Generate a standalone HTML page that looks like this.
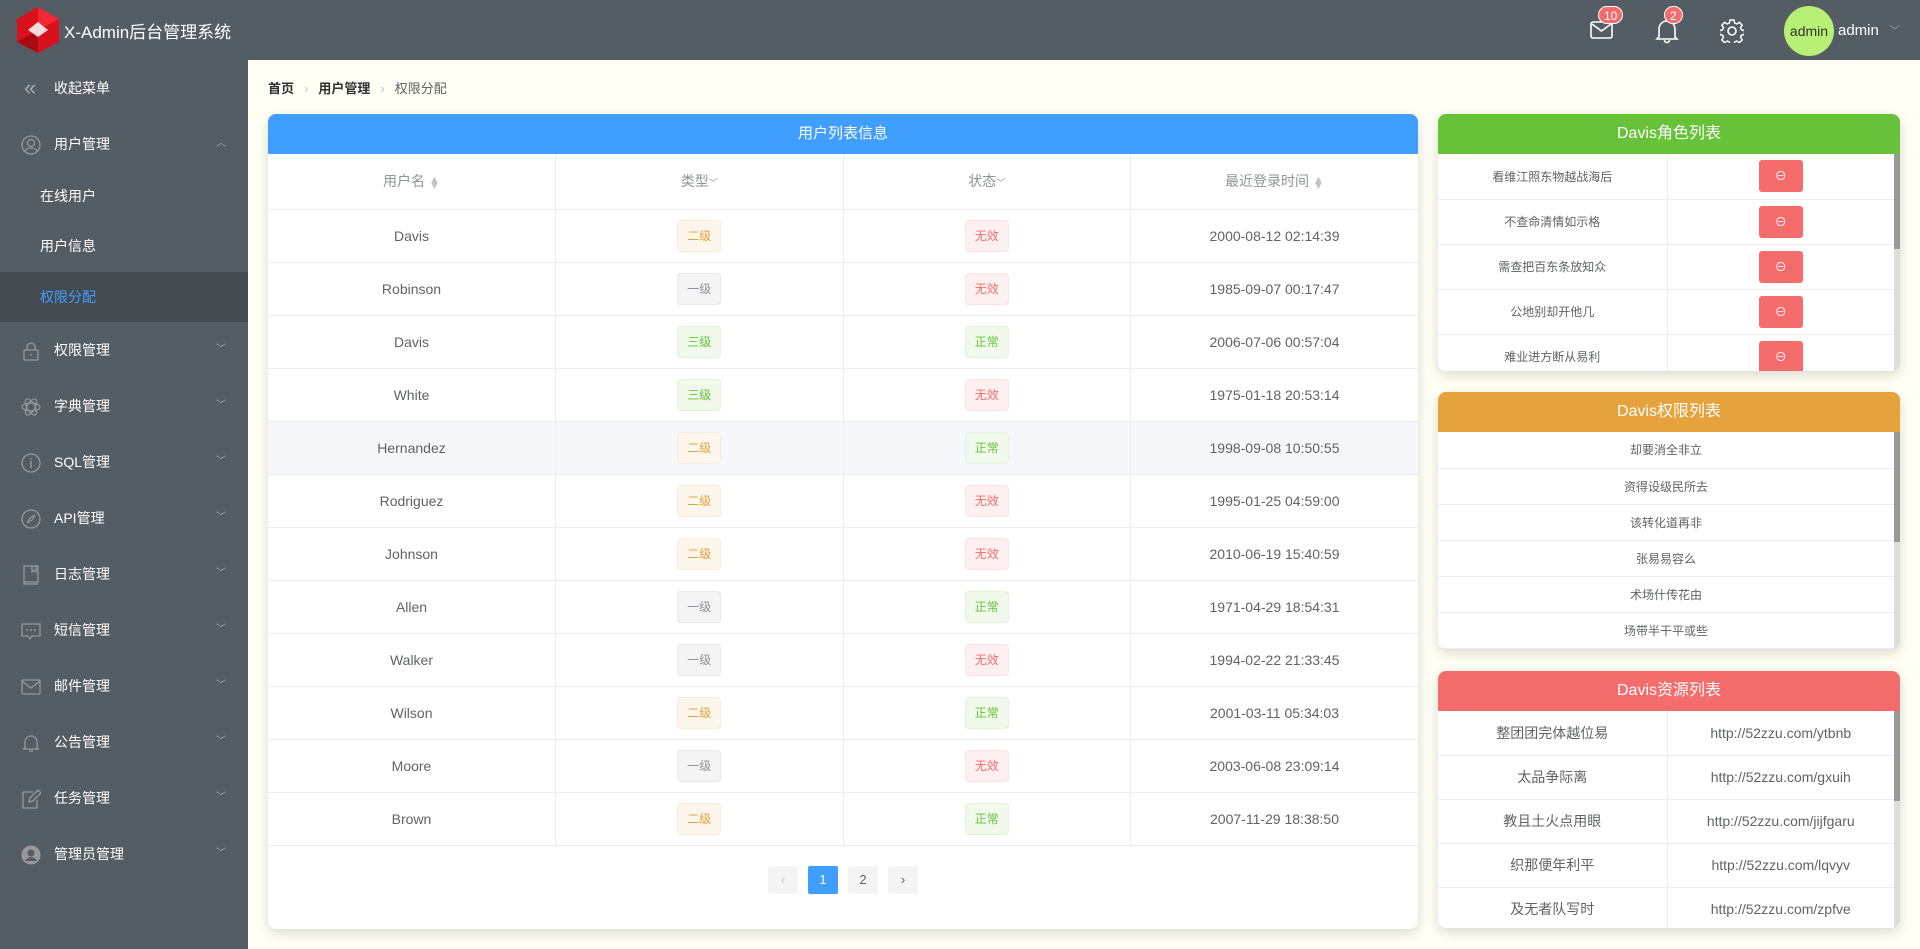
<!DOCTYPE html>
<html><head><meta charset="utf-8">
<style>
*{box-sizing:border-box;margin:0;padding:0}
body{width:1920px;height:949px;overflow:hidden;background:#fffff4;font-family:"Liberation Sans","Noto Sans CJK SC",sans-serif;position:relative;color:#606266}
.top{position:absolute;left:0;top:0;width:1920px;height:60px;background:#545c64}
.side{position:absolute;left:0;top:60px;width:248px;height:889px;background:#545c64}
.it{position:absolute;left:0;width:248px;height:56px;line-height:56px;color:#fff;font-size:14px}
.it .ic{position:absolute;left:21px;top:19px;width:20px;height:20px}
.it .tx{position:absolute;left:54px}
.it .ar{position:absolute;left:216px;top:0;color:#aaa;font-size:10px}
.sub{position:absolute;left:0;width:248px;height:50px;line-height:50px;color:#fff;font-size:14px;padding-left:40px}
.card{position:absolute;background:#fff;border-radius:8px;box-shadow:0 4px 12px rgba(0,0,0,.15);overflow:hidden}
.ch{height:40px;line-height:40px;text-align:center;color:#fff;font-size:16px}
table{border-collapse:collapse;width:100%;table-layout:fixed}
td,th{border-bottom:1px solid #ebeef5;border-right:1px solid #ebeef5;text-align:center;font-weight:normal}
td:last-child,th:last-child{border-right:none}
.main td{height:53px;font-size:14px}
.main th{height:55px;color:#909399;font-size:14px}
.tag{display:inline-block;width:44px;height:32px;line-height:30px;border:1px solid;border-radius:4px;font-size:12px}
.o{color:#e6a23c;background:#fdf6ec;border-color:#faecd8}
.g{color:#909399;background:#f4f4f5;border-color:#e9e9eb}
.s{color:#67c23a;background:#f0f9eb;border-color:#e1f3d8}
.r{color:#f56c6c;background:#fef0f0;border-color:#fde2e2}
.pg{position:absolute;top:866px;width:30px;height:28px;line-height:28px;text-align:center;background:#f4f4f5;border-radius:2px;font-size:13px;color:#606266}
.sc{position:absolute;right:0;width:6px;background:#ddd}
.sc i{display:block;width:6px;background:#999}
.badge{position:absolute;height:18px;line-height:18px;border-radius:9px;background:#f56c6c;color:#fff;font-size:12px;text-align:center;border:1px solid #fff;padding:0 5px}
.btn{display:inline-block;width:44px;height:32px;line-height:32px;background:#f56c6c;color:#fff;border-radius:3px}
.srt{color:#c0c4cc;font-size:11px;display:inline-block;line-height:6px;vertical-align:middle;margin-left:4px}
</style></head><body>
<div class="top">
 <svg style="position:absolute;left:16px;top:6px" width="44" height="48" viewBox="0 0 44 48"><polygon points="22,1 43,13 43,36 22,47 1,36 1,13" fill="#d9111b"/><polygon points="22,1 43,13 22,24" fill="#f02a30"/><polygon points="1,36 22,24 22,47" fill="#a80c12"/><polygon points="22,16 32,24 22,31 12,24" fill="#fff" opacity=".85"/></svg>
 <div style="position:absolute;left:64px;top:18px;color:#fff;font-size:17px">X-Admin后台管理系统</div>
 <svg style="position:absolute;left:1590px;top:20px" width="24" height="20" viewBox="0 0 24 20"><rect x="1" y="2" width="21" height="16" rx="2" fill="none" stroke="#fff" stroke-width="1.6"/><path d="M2 4l9.5 7 9.5-7" fill="none" stroke="#fff" stroke-width="1.6"/></svg>
 <div class="badge" style="left:1598px;top:6px">10</div>
 <svg style="position:absolute;left:1655px;top:18px" width="24" height="26" viewBox="0 0 24 26"><path d="M4 19V11a8 8 0 0116 0v8l2 2H2z M9.5 22a2.5 2.5 0 005 0 M12 1v2" fill="none" stroke="#fff" stroke-width="1.6"/></svg>
 <div class="badge" style="left:1664px;top:6px">2</div>
 <svg style="position:absolute;left:1720px;top:19px" width="24" height="24" viewBox="0 0 24 24"><circle cx="12" cy="12" r="4" fill="none" stroke="#fff" stroke-width="1.6"/><path d="M10 1h4l.6 3 2.2 1 2.6-1.7 2.8 2.8-1.7 2.6 1 2.2 3 .6v4l-3 .6-1 2.2 1.7 2.6-2.8 2.8-2.6-1.7-2.2 1-.6 3h-4l-.6-3-2.2-1-2.6 1.7-2.8-2.8 1.7-2.6-1-2.2-3-.6v-4l3-.6 1-2.2-1.7-2.6 2.8-2.8 2.6 1.7 2.2-1z" fill="none" stroke="#fff" stroke-width="1.5" stroke-linejoin="round"/></svg>
 <div style="position:absolute;left:1784px;top:6px;width:50px;height:50px;border-radius:50%;background:#b8ef75;color:#333;font-size:14px;line-height:50px;text-align:center">admin</div>
 <div style="position:absolute;left:1838px;top:22px;color:#fff;font-size:15px">admin</div>
 <div style="position:absolute;left:1890px;top:22px;color:#aaa;font-size:10px">﹀</div>
</div>
<div class="side">
 <div class="it" style="top:0"><span class="ic" style="color:#aaa;font-size:22px;line-height:18px;left:24px">«</span><span class="tx">收起菜单</span></div>
 <div class="it" style="top:56px"><svg class="ic" viewBox="0 0 20 20"><circle cx="10" cy="10" r="9" fill="none" stroke="#999" stroke-width="1.3"/><circle cx="10" cy="8" r="3.5" fill="none" stroke="#999" stroke-width="1.3"/><path d="M4 16c2-4 10-4 12 0" fill="none" stroke="#999" stroke-width="1.3"/></svg><span class="tx">用户管理</span><span class="ar">︿</span></div>
 <div class="sub" style="top:111px">在线用户</div>
 <div class="sub" style="top:161px">用户信息</div>
 <div class="sub" style="top:212px;background:#434a50;color:#409eff">权限分配</div>
 <div class="it" style="top:262px"><svg class="ic" viewBox="0 0 20 20"><rect x="3" y="9" width="14" height="10" rx="1" fill="none" stroke="#999" stroke-width="1.3"/><path d="M6 9V6a4 4 0 018 0v3M10 13v2" fill="none" stroke="#999" stroke-width="1.3"/></svg><span class="tx">权限管理</span><span class="ar">﹀</span></div>
 <div class="it" style="top:318px"><svg class="ic" viewBox="0 0 20 20"><ellipse cx="10" cy="10" rx="9" ry="4" fill="none" stroke="#999" stroke-width="1.2"/><ellipse cx="10" cy="10" rx="9" ry="4" transform="rotate(60 10 10)" fill="none" stroke="#999" stroke-width="1.2"/><ellipse cx="10" cy="10" rx="9" ry="4" transform="rotate(120 10 10)" fill="none" stroke="#999" stroke-width="1.2"/></svg><span class="tx">字典管理</span><span class="ar">﹀</span></div>
 <div class="it" style="top:374px"><svg class="ic" viewBox="0 0 20 20"><circle cx="10" cy="10" r="9" fill="none" stroke="#999" stroke-width="1.3"/><path d="M10 8v7M10 5v1.5" stroke="#999" stroke-width="1.5"/></svg><span class="tx">SQL管理</span><span class="ar">﹀</span></div>
 <div class="it" style="top:430px"><svg class="ic" viewBox="0 0 20 20"><circle cx="10" cy="10" r="9" fill="none" stroke="#999" stroke-width="1.3"/><path d="M14 6l-3 5-5 3 3-5z" fill="none" stroke="#999" stroke-width="1.2"/></svg><span class="tx">API管理</span><span class="ar">﹀</span></div>
 <div class="it" style="top:486px"><svg class="ic" viewBox="0 0 20 20"><path d="M3 1h14v16H3zM3 17v2h14M11 1v6l2-1.5 2 1.5V1" fill="none" stroke="#999" stroke-width="1.3"/></svg><span class="tx">日志管理</span><span class="ar">﹀</span></div>
 <div class="it" style="top:542px"><svg class="ic" viewBox="0 0 20 20"><path d="M1 3h18v12h-8l-2 3-2-3H1z" fill="none" stroke="#999" stroke-width="1.3"/><circle cx="6" cy="9" r="1" fill="#999"/><circle cx="10" cy="9" r="1" fill="#999"/><circle cx="14" cy="9" r="1" fill="#999"/></svg><span class="tx">短信管理</span><span class="ar">﹀</span></div>
 <div class="it" style="top:598px"><svg class="ic" viewBox="0 0 20 20"><rect x="1" y="3" width="18" height="14" rx="1" fill="none" stroke="#999" stroke-width="1.3"/><path d="M1 4l9 7 9-7" fill="none" stroke="#999" stroke-width="1.3"/></svg><span class="tx">邮件管理</span><span class="ar">﹀</span></div>
 <div class="it" style="top:654px"><svg class="ic" viewBox="0 0 20 20"><path d="M4 15V9a6 6 0 0112 0v6l2 1H2zM8 18h4" fill="none" stroke="#999" stroke-width="1.3"/></svg><span class="tx">公告管理</span><span class="ar">﹀</span></div>
 <div class="it" style="top:710px"><svg class="ic" viewBox="0 0 20 20"><path d="M2 3h10M2 3v16h14v-8M8 13l1-4 8-8 3 3-8 8z" fill="none" stroke="#999" stroke-width="1.3"/></svg><span class="tx">任务管理</span><span class="ar">﹀</span></div>
 <div class="it" style="top:766px"><svg class="ic" viewBox="0 0 20 20"><circle cx="10" cy="10" r="9.5" fill="#999"/><circle cx="10" cy="8" r="3.5" fill="#545c64"/><path d="M4 16c2-5 10-5 12 0" fill="#545c64"/></svg><span class="tx">管理员管理</span><span class="ar">﹀</span></div>
</div>
<div style="position:absolute;left:268px;top:78px;font-size:13px;color:#303133"><b>首页</b><span style="color:#c0c4cc;margin:0 10px">›</span><b>用户管理</b><span style="color:#c0c4cc;margin:0 10px">›</span><span style="color:#606266">权限分配</span></div>

<div class="card main" style="left:268px;top:114px;width:1150px;height:815px">
 <div class="ch" style="background:#409eff;font-size:15px">用户列表信息</div>
 <table>
 <tr><th>用户名<span class="srt">▲<br>▼</span></th><th>类型<span style="font-size:9px">﹀</span></th><th>状态<span style="font-size:9px">﹀</span></th><th>最近登录时间<span class="srt">▲<br>▼</span></th></tr>
 <tr><td>Davis</td><td><span class="tag o">二级</span></td><td><span class="tag r">无效</span></td><td>2000-08-12 02:14:39</td></tr>
 <tr><td>Robinson</td><td><span class="tag g">一级</span></td><td><span class="tag r">无效</span></td><td>1985-09-07 00:17:47</td></tr>
 <tr><td>Davis</td><td><span class="tag s">三级</span></td><td><span class="tag s">正常</span></td><td>2006-07-06 00:57:04</td></tr>
 <tr><td>White</td><td><span class="tag s">三级</span></td><td><span class="tag r">无效</span></td><td>1975-01-18 20:53:14</td></tr>
 <tr style="background:#f5f7fa"><td>Hernandez</td><td><span class="tag o">二级</span></td><td><span class="tag s">正常</span></td><td>1998-09-08 10:50:55</td></tr>
 <tr><td>Rodriguez</td><td><span class="tag o">二级</span></td><td><span class="tag r">无效</span></td><td>1995-01-25 04:59:00</td></tr>
 <tr><td>Johnson</td><td><span class="tag o">二级</span></td><td><span class="tag r">无效</span></td><td>2010-06-19 15:40:59</td></tr>
 <tr><td>Allen</td><td><span class="tag g">一级</span></td><td><span class="tag s">正常</span></td><td>1971-04-29 18:54:31</td></tr>
 <tr><td>Walker</td><td><span class="tag g">一级</span></td><td><span class="tag r">无效</span></td><td>1994-02-22 21:33:45</td></tr>
 <tr><td>Wilson</td><td><span class="tag o">二级</span></td><td><span class="tag s">正常</span></td><td>2001-03-11 05:34:03</td></tr>
 <tr><td>Moore</td><td><span class="tag g">一级</span></td><td><span class="tag r">无效</span></td><td>2003-06-08 23:09:14</td></tr>
 <tr><td>Brown</td><td><span class="tag o">二级</span></td><td><span class="tag s">正常</span></td><td>2007-11-29 18:38:50</td></tr>
 </table>
</div>
<div class="pg" style="left:768px;color:#c0c4cc">‹</div>
<div class="pg" style="left:808px;background:#409eff;color:#fff">1</div>
<div class="pg" style="left:848px">2</div>
<div class="pg" style="left:888px">›</div>

<div class="card" style="left:1438px;top:114px;width:462px;height:257px">
 <div class="ch" style="background:#67c23a">Davis角色列表</div>
 <table style="width:456px;font-size:12px">
 <tr><td style="height:45px;width:229px">看维江照东物越战海后</td><td><span class="btn">⊖</span></td></tr>
 <tr><td style="height:45px">不查命清情如示格</td><td><span class="btn">⊖</span></td></tr>
 <tr><td style="height:45px">需查把百东条放知众</td><td><span class="btn">⊖</span></td></tr>
 <tr><td style="height:45px">公地别却开他几</td><td><span class="btn">⊖</span></td></tr>
 <tr><td style="height:45px">难业进方断从易利</td><td><span class="btn">⊖</span></td></tr>
 </table>
 <div class="sc" style="top:40px;height:217px"><i style="height:95px"></i></div>
</div>

<div class="card" style="left:1438px;top:392px;width:462px;height:257px">
 <div class="ch" style="background:#e6a23c">Davis权限列表</div>
 <table style="width:456px;font-size:12px">
 <tr><td style="height:36px">却要消全非立</td></tr>
 <tr><td style="height:36px">资得设级民所去</td></tr>
 <tr><td style="height:36px">该转化道再非</td></tr>
 <tr><td style="height:36px">张易易容么</td></tr>
 <tr><td style="height:36px">术场什传花由</td></tr>
 <tr><td style="height:36px">场带半干平或些</td></tr>
 </table>
 <div class="sc" style="top:40px;height:217px"><i style="height:110px"></i></div>
</div>

<div class="card" style="left:1438px;top:671px;width:462px;height:257px">
 <div class="ch" style="background:#f56c6c">Davis资源列表</div>
 <table style="width:456px;font-size:14px">
 <tr><td style="height:44px;width:229px">整团团完体越位易</td><td>http://52zzu.com/ytbnb</td></tr>
 <tr><td style="height:44px">太品争际离</td><td>http://52zzu.com/gxuih</td></tr>
 <tr><td style="height:44px">教且土火点用眼</td><td>http://52zzu.com/jijfgaru</td></tr>
 <tr><td style="height:44px">织那便年利平</td><td>http://52zzu.com/lqvyv</td></tr>
 <tr><td style="height:44px">及无者队写时</td><td>http://52zzu.com/zpfve</td></tr>
 </table>
 <div class="sc" style="top:40px;height:217px"><i style="height:90px"></i></div>
</div>
</body></html>
